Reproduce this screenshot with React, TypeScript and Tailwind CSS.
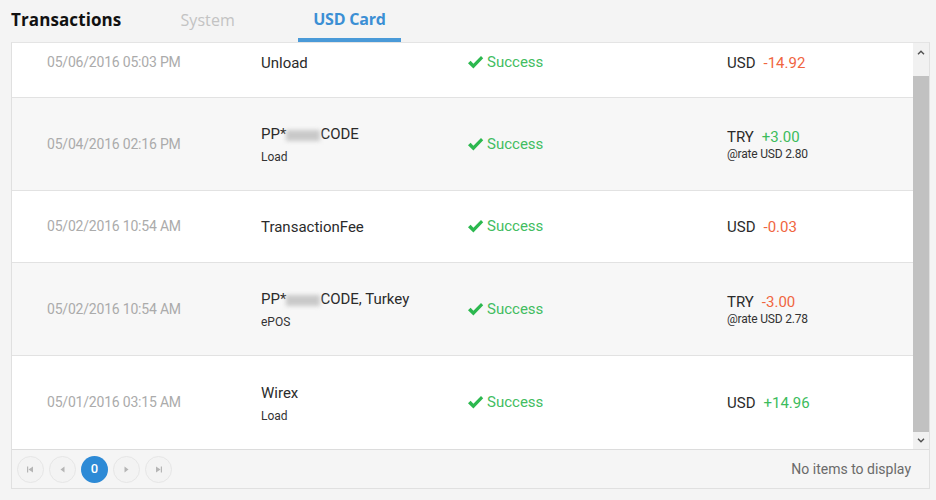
import React from "react";

type Row = {
  date: string;
  title: React.ReactNode;
  sub?: string;
  cur: string;
  amount: string;
  positive: boolean;
  rate?: string;
  h: string;
  bg: string;
  offset?: string;
};

const Blur = () => (
  <span className="inline-block w-[34px] h-[11px] bg-[#c9c9c9] blur-[2px] align-middle" />
);

const rows: Row[] = [
  { date: "05/06/2016 05:03 PM", title: "Unload", cur: "USD", amount: "-14.92", positive: false, h: "h-[55px]", bg: "bg-white", offset: "-mt-[15px]" },
  { date: "05/04/2016 02:16 PM", title: <>PP*<Blur />CODE</>, sub: "Load", cur: "TRY", amount: "+3.00", positive: true, rate: "@rate USD 2.80", h: "h-[93px]", bg: "bg-[#f7f7f7]" },
  { date: "05/02/2016 10:54 AM", title: "TransactionFee", cur: "USD", amount: "-0.03", positive: false, h: "h-[72px]", bg: "bg-white" },
  { date: "05/02/2016 10:54 AM", title: <>PP*<Blur />CODE, Turkey</>, sub: "ePOS", cur: "TRY", amount: "-3.00", positive: false, rate: "@rate USD 2.78", h: "h-[93px]", bg: "bg-[#f7f7f7]" },
  { date: "05/01/2016 03:15 AM", title: "Wirex", sub: "Load", cur: "USD", amount: "+14.96", positive: true, h: "h-[93px]", bg: "bg-white" },
];

function Check() {
  return (
    <svg width="17" height="15" viewBox="0 0 17 15" className="mr-[3px]">
      <path d="M1 8.2 L3.6 5.8 L6.4 8.8 L14 1 L16.2 3.2 L6.4 13.6 Z" fill="#2cb84f" />
    </svg>
  );
}

function PagerBtn({ children, active }: { children: React.ReactNode; active?: boolean }) {
  return (
    <div
      className={
        active
          ? "w-[27px] h-[27px] rounded-full bg-[#2d8ad6] text-white text-[13px] font-medium flex items-center justify-center"
          : "w-[27px] h-[27px] rounded-full border border-[#e6e6e6] bg-[#f3f3f3] flex items-center justify-center"
      }
    >
      {children}
    </div>
  );
}

function Tri({ dir }: { dir: "first" | "prev" | "next" | "last" }) {
  const fill = "#b5b5b5";
  return (
    <svg width="9" height="7" viewBox="0 0 9 7">
      {dir === "first" && (
        <>
          <rect x="1" y="0.5" width="1.2" height="6" fill={fill} />
          <path d="M7 0.5 L2.5 3.5 L7 6.5 Z" fill={fill} />
        </>
      )}
      {dir === "prev" && <path d="M6.5 0.5 L2.5 3.5 L6.5 6.5 Z" fill={fill} />}
      {dir === "next" && <path d="M2.5 0.5 L6.5 3.5 L2.5 6.5 Z" fill={fill} />}
      {dir === "last" && (
        <>
          <path d="M2 0.5 L6.5 3.5 L2 6.5 Z" fill={fill} />
          <rect x="6.8" y="0.5" width="1.2" height="6" fill={fill} />
        </>
      )}
    </svg>
  );
}

export default function App() {
  return (
    <div className="w-[936px] h-[500px] bg-[#f4f4f4] font-['Roboto',sans-serif] overflow-hidden">
      {/* tabs */}
      <div className="h-[42px] flex items-end pl-[11px] font-['Open_Sans',sans-serif]">
        <div className="h-[42px] flex items-center pb-[3px] text-[17px] font-bold text-[#111] tracking-[0.1px]">
          Transactions
        </div>
        <div className="h-[42px] flex items-center pb-[3px] ml-[59px] text-[16px] text-[#c3c3c3] tracking-[0.1px]">
          System
        </div>
        <div className="h-[42px] ml-[63px] w-[103px] flex flex-col">
          <div className="flex-1 flex items-center justify-center pb-[1px] text-[16px] font-bold text-[#3b8fd4] tracking-[-0.2px]">
            USD Card
          </div>
          <div className="h-[4px] bg-[#4a9ad8]" />
        </div>
      </div>

      {/* panel */}
      <div className="ml-[11px] w-[919px] border border-[#e0e0e0] border-t-[#e4e4e4] bg-white">
        <div className="flex h-[406px]">
          <div className="flex-1 overflow-hidden">
            {rows.map((r, i) => (
              <div
                key={i}
                className={`${r.h} ${r.bg} flex items-center ${i < rows.length - 1 ? "border-b border-[#e2e2e2]" : ""} overflow-hidden`}
              >
                <div className={`flex items-center w-full ${r.offset ?? ""}`}>
                  <div className="w-[249px] pl-[35px] text-[14px] text-[#ababab] tracking-[-0.2px]">{r.date}</div>
                  <div className="w-[206px]">
                    <div className="text-[15px] text-[#2b2b2b] leading-[20px]">{r.title}</div>
                    {r.sub && <div className="text-[12px] text-[#333] mt-[6px] leading-[14px]">{r.sub}</div>}
                  </div>
                  <div className="w-[260px] flex items-center text-[15px] text-[#42bd61]">
                    <Check />
                    Success
                  </div>
                  <div>
                    <div className="text-[15px] text-[#2b2b2b] leading-[20px]">
                      {r.cur}
                      <span className={`ml-[8px] ${r.positive ? "text-[#3cbc5c]" : "text-[#f0653f]"}`}>{r.amount}</span>
                    </div>
                    {r.rate && <div className="text-[12px] text-[#333] leading-[14px] tracking-[-0.2px]">{r.rate}</div>}
                  </div>
                </div>
              </div>
            ))}
          </div>
          {/* scrollbar */}
          <div className="w-[16px] bg-[#f1f1f1] flex flex-col">
            <div className="h-[18px] flex items-center justify-center">
              <svg width="8" height="5" viewBox="0 0 8 5">
                <path d="M1 4.2 L4 1.2 L7 4.2" stroke="#505050" strokeWidth="1.4" fill="none" />
              </svg>
            </div>
            <div className="h-[15px]" />
            <div className="flex-1 bg-[#c1c1c1]" />
            <div className="h-[17px] flex items-center justify-center">
              <svg width="8" height="5" viewBox="0 0 8 5">
                <path d="M1 0.8 L4 3.8 L7 0.8" stroke="#505050" strokeWidth="1.4" fill="none" />
              </svg>
            </div>
          </div>
        </div>

        {/* footer */}
        <div className="h-[39px] bg-[#f5f5f5] border-t border-[#dcdcdc] flex items-center pl-[5px] pr-[18px]">
          <div className="flex items-center gap-[5px]">
            <PagerBtn><Tri dir="first" /></PagerBtn>
            <PagerBtn><Tri dir="prev" /></PagerBtn>
            <PagerBtn active>0</PagerBtn>
            <PagerBtn><Tri dir="next" /></PagerBtn>
            <PagerBtn><Tri dir="last" /></PagerBtn>
          </div>
          <div className="ml-auto text-[14px] text-[#6a6a6a]">No items to display</div>
        </div>
      </div>
    </div>
  );
}
